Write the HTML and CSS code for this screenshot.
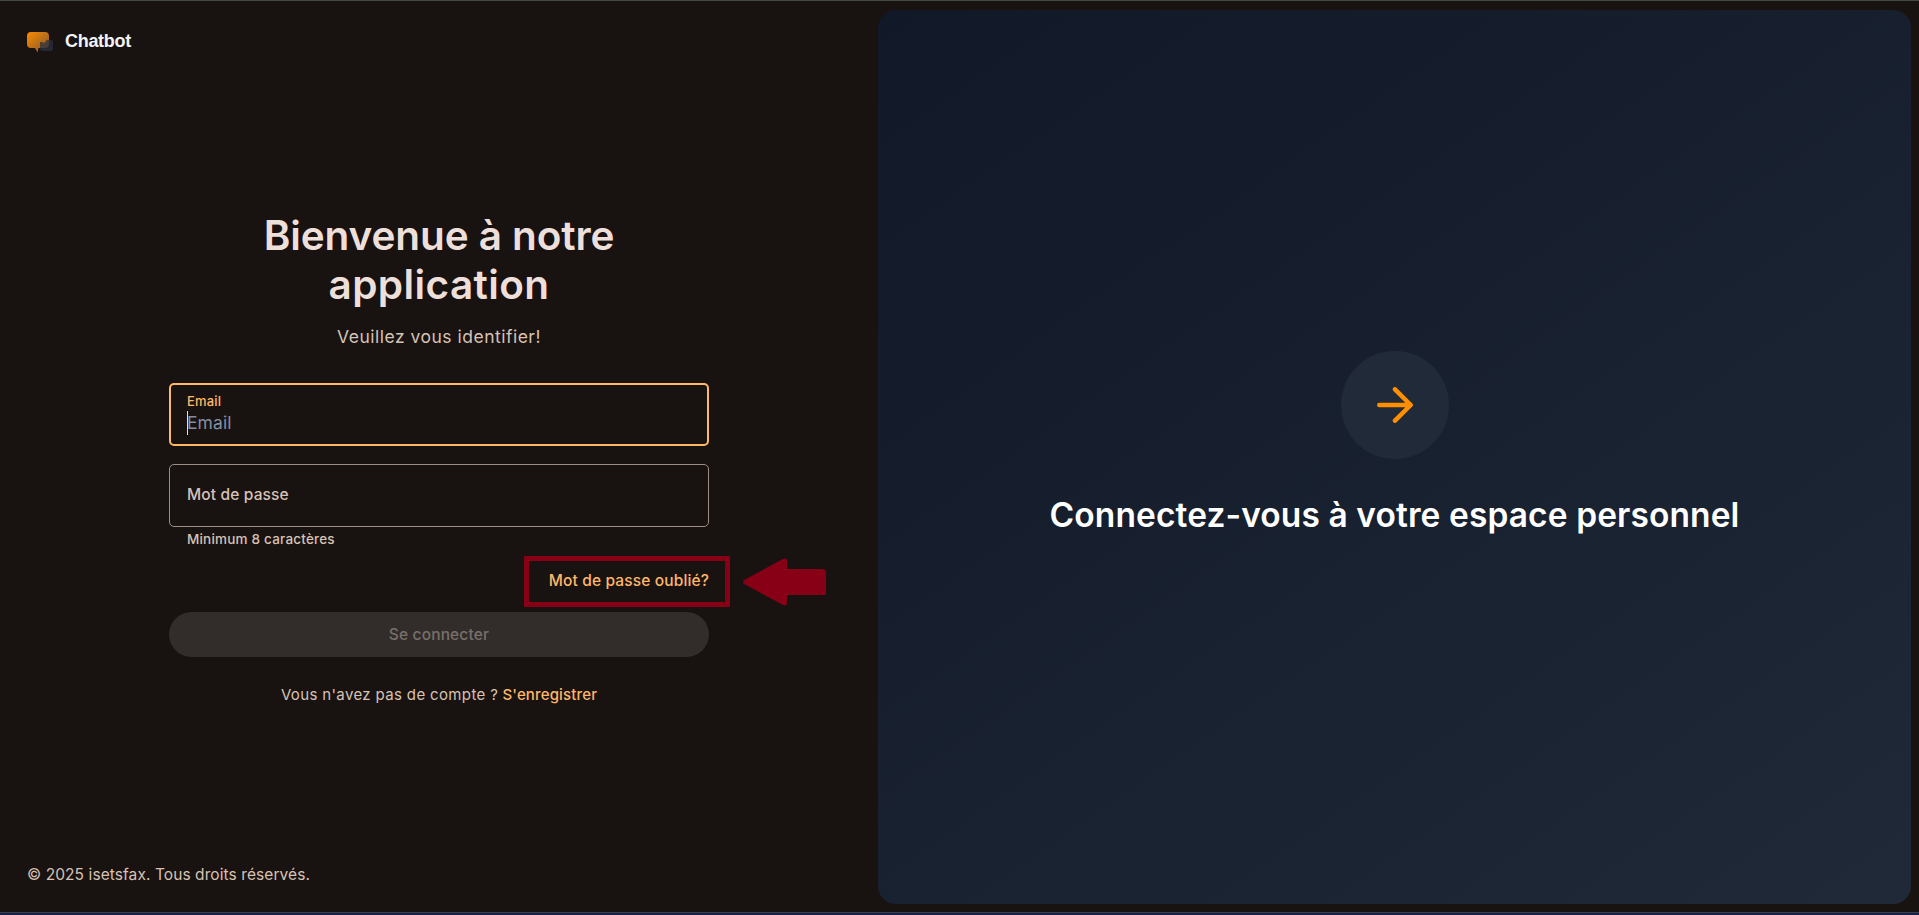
FILE: index.html
```html
<!DOCTYPE html>
<html lang="fr">
<head>
<meta charset="utf-8">
<title>Chatbot</title>
<link rel="stylesheet" href="styles.css">
</head>
<body>
<div class="page">
  <main class="left">
    <header class="brand">
      <svg class="logo" width="28" height="22" viewBox="0 0 28 22">
        <defs><linearGradient id="g" x1="0" y1="0" x2="1" y2="1"><stop offset="0" stop-color="#fb8c00"/><stop offset="1" stop-color="#7d5430"/></linearGradient></defs>
        <path d="M5 1h14a4 4 0 0 1 4 4v8a4 4 0 0 1-4 4h-6.500l-1 4.500L9 17H5a4 4 0 0 1-4-4V5a4 4 0 0 1 4-4z" fill="url(#g)"/>
        <path d="M16 11l2 1 3-3h4a2 2 0 0 1 2 2v7a2 2 0 0 1-2 2H16a2 2 0 0 1-2-2v-7z" fill="#29313f" fill-opacity=".75"/>
      </svg>
      <span class="brand-name">Chatbot</span>
    </header>
    <form class="form">
      <h1 class="title"><span class="t1">Bienvenue à notre</span><br><span class="t2">application</span></h1>
      <p class="subtitle">Veuillez vous identifier!</p>
      <div class="field focused">
        <label class="label-small">Email</label>
        <div class="placeholder"><span>Email</span></div>
      </div>
      <div class="field password"><label class="label">Mot de passe</label></div>
      <div class="hint">Minimum 8 caractères</div>
      <div class="forgot">
        <a class="forgot-link">Mot de passe oublié?</a>
        <span class="highlight"></span>
        <svg class="pointer" width="84" height="48" viewBox="0 0 84 48"><path d="M0 24.500Q0 22.500 2 21.500L40 1q4-1.500 4 2v8h35q4 0 4 4v22H44v8q0 3.500-4 2L2 26.500Q0 25.500 0 24.500z" fill="#880015"/></svg>
      </div>
      <button class="submit" type="button">Se connecter</button>
      <p class="register"><span class="ask">Vous n'avez pas de compte ?</span> <a class="signup">S'enregistrer</a></p>
    </form>
    <footer class="footer">© 2025 isetsfax. Tous droits réservés.</footer>
  </main>
  <aside class="right">
    <div class="circle">
      <svg width="36" height="36" viewBox="0 0 36 36" fill="none" stroke="#ff8f00" stroke-width="4.500" stroke-linecap="round" stroke-linejoin="round"><path d="M2.300 18H33M18 2.300L33.700 18 18 33.700"/></svg>
    </div>
    <h2 class="headline">Connectez-vous à votre espace personnel</h2>
  </aside>
</div>
</body>
</html>
```
FILE: styles.css
```css
* { box-sizing: border-box; }
body { margin: 0; background: #181210; color: #d8c2b4; font-family: Inter, sans-serif; font-size: 15px; }
h1, h2, p { margin: 0; }
.page { position: relative; display: flex; height: 915px; padding: 9px 8px 9px 0; border-top: 1px solid #434746; border-bottom: 2px solid #16224c; box-shadow: inset 0 -1px #3c3f4a; }
.left { width: 878px; display: flex; flex-direction: column; padding: 17px 27px 19px; }
.brand { display: flex; align-items: center; height: 28px; gap: 11px; }
.brand .logo { margin-left: -1px; margin-top: 1px; }
.brand-name { font: bold 18px "Liberation Sans", sans-serif; letter-spacing: -.3px; color: #f1f3f7; }
.form { width: 540px; margin: 156px auto 0; display: flex; flex-direction: column; }
.title { text-align: center; font-size: 40.500px; line-height: 49px; font-weight: 600; color: #eddfd9; }
.t1 { letter-spacing: -.1px; }
.t2 { letter-spacing: .4px; }
.subtitle { text-align: center; font-size: 17.500px; line-height: 24px; letter-spacing: .5px; margin-top: 16px; color: #d7c2b5; }
.field { height: 63px; border: 1px solid #9f8d81; border-radius: 5px; padding: 0 17px; }
.focused { margin-top: 34px; border: 2px solid #ffb868; padding: 8px 16px; }
.label-small { display: block; font-size: 13px; line-height: 16px; font-weight: 500; letter-spacing: .2px; color: #ffb868; }
.placeholder { border-left: 1px solid #ffd9aa; height: 24px; font-size: 17.500px; line-height: 24px; letter-spacing: .1px; color: #8290a5; margin-top: 2px; }
.placeholder span { margin-left: -1px; }
.password { margin-top: 18px; display: flex; align-items: center; }
.label { font-size: 15.500px; font-weight: 500; letter-spacing: .15px; color: #d7c2b8; margin-top: -2px; }
.hint { padding-left: 18px; margin-top: 3px; font-size: 13.500px; line-height: 18px; font-weight: 500; letter-spacing: .2px; }
.forgot { position: relative; align-self: flex-end; margin-top: 23px; line-height: 20px; }
.forgot-link { font-size: 15.500px; color: #ffb868; font-weight: 500; letter-spacing: .13px; }
.signup { color: #ffb868; font-weight: 500; letter-spacing: .15px; }
.highlight { position: absolute; right: -21px; top: -15px; width: 206px; height: 51px; border: 5px solid #880015; }
.pointer { position: absolute; right: -118px; top: -13px; }
.submit { height: 45px; margin-top: 21px; border: 0; border-radius: 23px; background: #322d2a; color: #77706b; font: 500 15.500px Inter, sans-serif; letter-spacing: .15px; }
.register { text-align: center; margin-top: 28px; line-height: 20px; }
.ask { letter-spacing: .36px; }
.footer { margin-top: auto; font-size: 15.500px; line-height: 20px; letter-spacing: .08px; }
.right { flex: 1; display: flex; flex-direction: column; align-items: center; border-radius: 18px; background: linear-gradient(145deg, #111827 0%, #1f2937 100%); padding-top: 341px; }
.circle { width: 108px; height: 108px; border-radius: 50%; background: #212a38; display: grid; place-items: center; }
.headline { margin-top: 35px; font-size: 33.500px; line-height: 42px; letter-spacing: .1px; font-weight: 600; color: #fff; white-space: nowrap; }
```
